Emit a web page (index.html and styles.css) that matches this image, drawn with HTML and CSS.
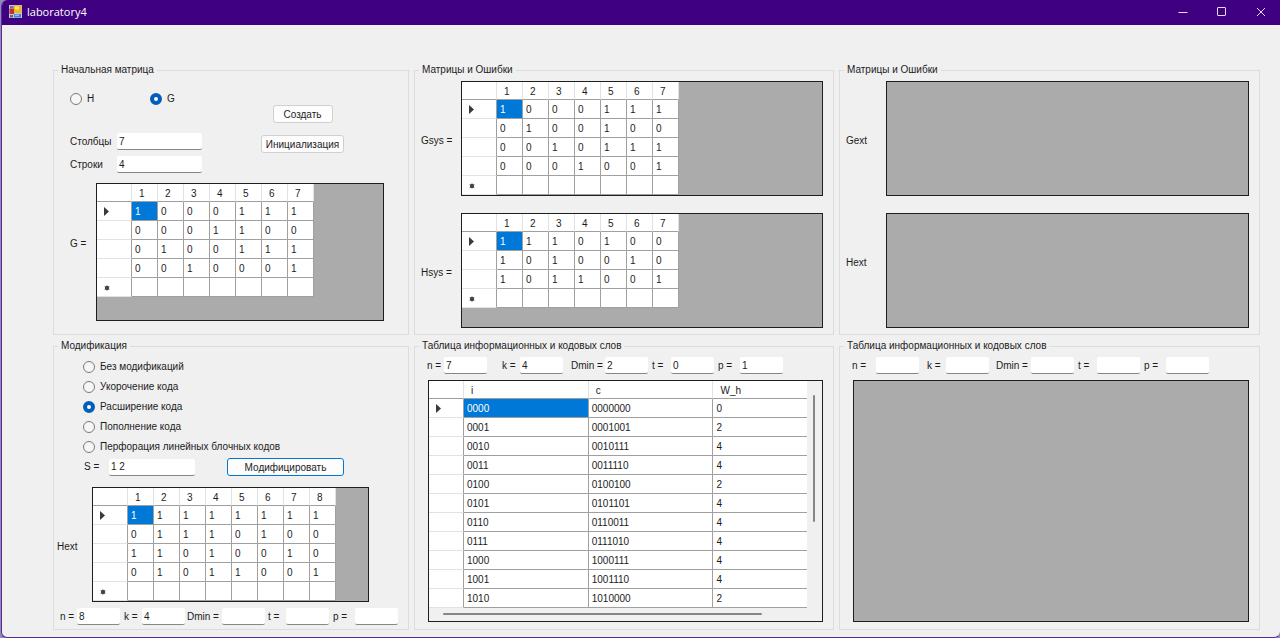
FILE: index.html
```html
<!DOCTYPE html>
<html lang="ru">
<head>
<meta charset="utf-8">
<title>laboratory4</title>
<link rel="stylesheet" href="styles.css">
</head>
<body>
<svg width="0" height="0" class="sprite" aria-hidden="true">
  <symbol id="arrow" viewBox="0 0 5 9"><path d="M0 0L5 4.500L0 9Z" fill="#3a3a3a"/></symbol>
  <symbol id="star" viewBox="0 0 6 6"><path d="M3 0.500V5.500M0.600 1.500L5.400 4.500M5.400 1.500L0.600 4.500" stroke="#777" stroke-width="1"/><circle cx="3" cy="3" r="2.200" fill="#444"/></symbol>
</svg>
<div class="window">
  <header class="titlebar">
    <svg class="app-icon" viewBox="0 0 13 13" aria-hidden="true">
      <rect width="13" height="13" fill="#c9c4d6"/>
      <rect x="0.500" y="3.500" width="4.500" height="5.500" fill="#b8342c"/>
      <rect x="1" y="1" width="3.500" height="2" fill="#77748c"/>
      <rect x="5" y="0.500" width="7.500" height="7.500" fill="#f0b41c"/>
      <rect x="6" y="1.500" width="4" height="3" fill="#ffe27a"/>
      <rect x="5" y="9" width="7" height="3.500" fill="#3f7fe0"/>
      <rect x="6" y="9.500" width="4" height="1.500" fill="#8fbcff"/>
      <rect x="1" y="10" width="3" height="2.500" fill="#66637c"/>
    </svg>
    <h1 class="title">laboratory4</h1>
    <button class="win-btn" aria-label="Свернуть"><svg viewBox="0 0 10 10"><path d="M0.500 5.500H9.500"/></svg></button>
    <button class="win-btn" aria-label="Развернуть"><svg viewBox="0 0 10 10"><rect x="0.500" y="0.500" width="8" height="8" rx="0.500"/></svg></button>
    <button class="win-btn" aria-label="Закрыть"><svg viewBox="0 0 10 10"><path d="M1 1L9 9M9 1L1 9"/></svg></button>
  </header>

  <main class="form">
    <fieldset class="group">
      <legend>Начальная матрица</legend>
      <div class="setup">
        <div class="setup-left">
          <div class="kind">
            <label class="radio"><input type="radio" name="kind">H</label>
            <label class="radio"><input type="radio" name="kind" checked>G</label>
          </div>
          <div class="sizes">
            <label for="cols">Столбцы</label><input class="text" id="cols" value="7">
            <label for="rows">Строки</label><input class="text" id="rows" value="4">
          </div>
        </div>
        <div class="setup-buttons">
          <button class="btn btn-small">Создать</button>
          <button class="btn btn-init">Инициализация</button>
        </div>
      </div>
      <div class="matrix matrix-g">
        <span class="matrix-label label-high">G =</span>
        <div class="grid">
          <table class="cells">
            <thead><tr><th></th><th>1</th><th>2</th><th>3</th><th>4</th><th>5</th><th>6</th><th>7</th></tr></thead>
            <tbody>
              <tr><th><svg class="arrow"><use href="#arrow"/></svg></th><td class="selected">1</td><td>0</td><td>0</td><td>0</td><td>1</td><td>1</td><td>1</td></tr>
              <tr><th></th><td>0</td><td>0</td><td>0</td><td>1</td><td>1</td><td>0</td><td>0</td></tr>
              <tr><th></th><td>0</td><td>1</td><td>0</td><td>0</td><td>1</td><td>1</td><td>1</td></tr>
              <tr><th></th><td>0</td><td>0</td><td>1</td><td>0</td><td>0</td><td>0</td><td>1</td></tr>
              <tr><th><svg class="star"><use href="#star"/></svg></th><td></td><td></td><td></td><td></td><td></td><td></td><td></td></tr>
            </tbody>
          </table>
        </div>
      </div>
    </fieldset>

    <fieldset class="group">
      <legend>Матрицы и Ошибки</legend>
      <div class="matrices">
        <span class="matrix-label label-low">Gsys =</span>
        <div class="grid">
          <table class="cells">
            <thead><tr><th></th><th>1</th><th>2</th><th>3</th><th>4</th><th>5</th><th>6</th><th>7</th></tr></thead>
            <tbody>
              <tr><th><svg class="arrow"><use href="#arrow"/></svg></th><td class="selected">1</td><td>0</td><td>0</td><td>0</td><td>1</td><td>1</td><td>1</td></tr>
              <tr><th></th><td>0</td><td>1</td><td>0</td><td>0</td><td>1</td><td>0</td><td>0</td></tr>
              <tr><th></th><td>0</td><td>0</td><td>1</td><td>0</td><td>1</td><td>1</td><td>1</td></tr>
              <tr><th></th><td>0</td><td>0</td><td>0</td><td>1</td><td>0</td><td>0</td><td>1</td></tr>
              <tr><th><svg class="star"><use href="#star"/></svg></th><td></td><td></td><td></td><td></td><td></td><td></td><td></td></tr>
            </tbody>
          </table>
        </div>
        <span class="matrix-label label-low">Hsys =</span>
        <div class="grid">
          <table class="cells">
            <thead><tr><th></th><th>1</th><th>2</th><th>3</th><th>4</th><th>5</th><th>6</th><th>7</th></tr></thead>
            <tbody>
              <tr><th><svg class="arrow"><use href="#arrow"/></svg></th><td class="selected">1</td><td>1</td><td>1</td><td>0</td><td>1</td><td>0</td><td>0</td></tr>
              <tr><th></th><td>1</td><td>0</td><td>1</td><td>0</td><td>0</td><td>1</td><td>0</td></tr>
              <tr><th></th><td>1</td><td>0</td><td>1</td><td>1</td><td>0</td><td>0</td><td>1</td></tr>
              <tr><th><svg class="star"><use href="#star"/></svg></th><td></td><td></td><td></td><td></td><td></td><td></td><td></td></tr>
            </tbody>
          </table>
        </div>
      </div>
    </fieldset>

    <fieldset class="group">
      <legend>Матрицы и Ошибки</legend>
      <div class="matrices">
        <span class="matrix-label label-low">Gext</span>
        <div class="grid"></div>
        <span class="matrix-label label-high">Hext</span>
        <div class="grid"></div>
      </div>
    </fieldset>

    <fieldset class="group">
      <legend>Модификация</legend>
      <div class="mods">
        <label class="radio"><input type="radio" name="mod">Без модификаций</label>
        <label class="radio"><input type="radio" name="mod">Укорочение кода</label>
        <label class="radio"><input type="radio" name="mod" checked>Расширение кода</label>
        <label class="radio"><input type="radio" name="mod">Пополнение кода</label>
        <label class="radio"><input type="radio" name="mod">Перфорация линейных блочных кодов</label>
      </div>
      <div class="apply">
        <label for="s">S =</label><input class="text" id="s" value="1 2">
        <button class="btn btn-default">Модифицировать</button>
      </div>
      <div class="matrix matrix-ext">
        <span class="matrix-label label-low">Hext</span>
        <div class="grid">
          <table class="cells cells-8">
            <thead><tr><th></th><th>1</th><th>2</th><th>3</th><th>4</th><th>5</th><th>6</th><th>7</th><th>8</th></tr></thead>
            <tbody>
              <tr><th><svg class="arrow"><use href="#arrow"/></svg></th><td class="selected">1</td><td>1</td><td>1</td><td>1</td><td>1</td><td>1</td><td>1</td><td>1</td></tr>
              <tr><th></th><td>0</td><td>1</td><td>1</td><td>1</td><td>0</td><td>1</td><td>0</td><td>0</td></tr>
              <tr><th></th><td>1</td><td>1</td><td>0</td><td>1</td><td>0</td><td>0</td><td>1</td><td>0</td></tr>
              <tr><th></th><td>0</td><td>1</td><td>0</td><td>1</td><td>1</td><td>0</td><td>0</td><td>1</td></tr>
              <tr><th><svg class="star"><use href="#star"/></svg></th><td></td><td></td><td></td><td></td><td></td><td></td><td></td><td></td></tr>
            </tbody>
          </table>
        </div>
      </div>
      <div class="params params-mod">
        <label for="n1">n =</label><input class="text" id="n1" value="8">
        <label for="k1">k =</label><input class="text" id="k1" value="4">
        <label for="d1">Dmin =</label><input class="text" id="d1">
        <label for="t1">t =</label><input class="text" id="t1">
        <label for="p1">p =</label><input class="text" id="p1">
      </div>
    </fieldset>

    <fieldset class="group">
      <legend>Таблица информационных и кодовых слов</legend>
      <div class="params params-words">
        <label for="n2">n =</label><input class="text" id="n2" value="7">
        <label for="k2">k =</label><input class="text" id="k2" value="4">
        <label for="d2">Dmin =</label><input class="text" id="d2" value="2">
        <label for="t2">t =</label><input class="text" id="t2" value="0">
        <label for="p2">p =</label><input class="text" id="p2" value="1">
      </div>
      <div class="grid words">
        <table class="cells cells-words">
          <colgroup><col class="col-head"><col class="col-word"><col class="col-word"><col></colgroup>
          <thead><tr><th></th><th>i</th><th>c</th><th>W_h</th></tr></thead>
          <tbody>
            <tr><th><svg class="arrow"><use href="#arrow"/></svg></th><td class="selected">0000</td><td>0000000</td><td>0</td></tr>
            <tr><th></th><td>0001</td><td>0001001</td><td>2</td></tr>
            <tr><th></th><td>0010</td><td>0010111</td><td>4</td></tr>
            <tr><th></th><td>0011</td><td>0011110</td><td>4</td></tr>
            <tr><th></th><td>0100</td><td>0100100</td><td>2</td></tr>
            <tr><th></th><td>0101</td><td>0101101</td><td>4</td></tr>
            <tr><th></th><td>0110</td><td>0110011</td><td>4</td></tr>
            <tr><th></th><td>0111</td><td>0111010</td><td>4</td></tr>
            <tr><th></th><td>1000</td><td>1000111</td><td>4</td></tr>
            <tr><th></th><td>1001</td><td>1001110</td><td>4</td></tr>
            <tr><th></th><td>1010</td><td>1010000</td><td>2</td></tr>
          </tbody>
        </table>
        <div class="track-v"><div class="thumb-v"></div></div>
        <div class="track-h"><div class="thumb-h"></div></div>
      </div>
    </fieldset>

    <fieldset class="group">
      <legend>Таблица информационных и кодовых слов</legend>
      <div class="params params-empty">
        <label for="n3">n =</label><input class="text" id="n3">
        <label for="k3">k =</label><input class="text" id="k3">
        <label for="d3">Dmin =</label><input class="text" id="d3">
        <label for="t3">t =</label><input class="text" id="t3">
        <label for="p3">p =</label><input class="text" id="p3">
      </div>
      <div class="grid words-empty"></div>
    </fieldset>
  </main>
</div>
</body>
</html>
```
FILE: styles.css
```css
* { box-sizing: border-box; }

body {
  margin: 0;
  padding-left: 1px;
  background: #8f8bb4;
  color: #1c1c1c;
  font: 10px/12px "Liberation Sans", Arial, sans-serif;
}

button, input { font: inherit; color: inherit; }

.sprite { position: absolute; }

.window {
  display: flex;
  flex-direction: column;
  min-height: 100vh;
  border: solid #5a2a9c;
  border-width: 0 0 1px 1px;
  border-radius: 6px 0 6px 6px;
  background: #f0f0f0;
  overflow: hidden;
}

/* Title bar */
.titlebar {
  display: flex;
  align-items: center;
  height: 25px;
  padding: 0 0 2px 7px;
  background: #3f0082;
  color: #fff;
}
.app-icon { width: 13px; height: 13px; }
.title {
  flex: 1;
  margin: 0 0 0 5px;
  font: 11px/16px "Open Sans", "Noto Sans", sans-serif;
}
.win-btn {
  display: grid;
  place-items: center;
  width: 39px;
  height: 23px;
  padding: 0;
  border: 0;
  background: none;
}
.win-btn svg {
  width: 10px;
  height: 10px;
  fill: none;
  stroke: #e6dcf2;
  stroke-width: 1;
}

/* Form */
.form {
  flex: 1;
  display: grid;
  grid-template-columns: 356fr 420fr 421fr;
  align-content: start;
  gap: 5px;
  padding: 39px 20px 7px 51px;
}
.group {
  min-width: 0;
  margin: 0;
  padding: 0;
  border: 1px solid #dcdcdc;
}
.group legend {
  margin-left: 4px;
  padding: 0 3px;
}

/* Controls */
.text {
  width: 43px;
  height: 17px;
  padding: 0 2px;
  border: 0;
  border-bottom: 1px solid #868686;
  border-radius: 2px;
  background: #fff;
}
.btn {
  height: 18px;
  padding: 1px 0 0;
  border: 1px solid #d0d0d0;
  border-radius: 3px;
  background: #fdfdfd;
  white-space: nowrap;
}
.btn-small { width: 60px; }
.btn-init { width: 83px; }
.btn-default {
  width: 117px;
  border-color: #0078d4;
}
.radio {
  display: flex;
  align-items: center;
  gap: 5px;
}
.radio input {
  appearance: none;
  width: 12px;
  height: 12px;
  margin: 0;
  border: 1px solid #7a7a7a;
  border-radius: 50%;
  background: #f6f6f6;
}
.radio input:checked {
  border: 4px solid #005fb8;
  background: #fff;
}

/* Source matrix */
.setup {
  display: flex;
  padding-left: 16px;
}
.setup-left { width: 191px; }
.kind {
  display: grid;
  grid-template-columns: 80px 80px;
  height: 14px;
  margin-top: 16px;
}
.sizes {
  display: grid;
  grid-template-columns: 47px 85px;
  align-items: center;
  row-gap: 6px;
  margin-top: 27px;
}
.sizes .text { width: 85px; }
.setup-buttons {
  display: flex;
  flex-direction: column;
  align-items: center;
  gap: 12px;
  padding-top: 29px;
}

.matrix {
  display: flex;
  align-items: center;
}
.matrix .grid { flex: 1; }
.matrix-g { padding: 10px 24px 13px 16px; }
.matrix-g .matrix-label { width: 26px; }
.matrix-g .grid { min-height: 138px; }
.matrix-ext { padding: 11px 39px 6px 3px; }
.matrix-ext .matrix-label { width: 35px; }
.label-high { padding-bottom: 16px; }
.label-low { padding-top: 5px; }

.matrices {
  display: grid;
  grid-template-columns: 40px 1fr;
  align-items: center;
  row-gap: 17px;
  padding: 5px 10px 6px 6px;
}

/* Data grid */
.grid {
  min-height: 115px;
  border: 1px solid #1e1e1e;
  background: #ababab;
}
.cells {
  width: 217px;
  table-layout: fixed;
  border-collapse: separate;
  border-spacing: 0;
  background: #fff;
}
.cells-8 { width: 243px; }
.cells th, .cells td {
  height: 19px;
  padding: 1px 0 0 3px;
  border: solid #a0a0a0;
  border-width: 0 1px 1px 0;
  text-align: left;
  font-weight: normal;
}
.cells thead th {
  height: 18px;
  padding: 2px 0 0 7px;
  border-right-color: #e2e2e2;
}
.cells tbody th {
  padding-left: 7px;
  border-bottom-color: #e2e2e2;
}
.cells th:first-child { width: 35px; }
.cells .selected { background: #0078d7; color: #fff; }
.arrow { display: block; width: 5px; height: 9px; }
.star { display: block; width: 6px; height: 6px; }

/* Modification */
.mods {
  display: grid;
  grid-auto-rows: 20px;
  padding: 5px 0 1px 29px;
}
.apply {
  display: grid;
  grid-template-columns: 25px 118px 117px;
  align-items: center;
  padding-left: 30px;
}
.apply .text { width: 86px; }

/* Code parameters */
.params {
  display: grid;
  align-items: center;
  white-space: nowrap;
}
.params-mod {
  grid-template-columns: 17px 47px 18px 45px 35px 46px 18px 47px 22px 43px;
  padding: 0 0 4px 6px;
}
.params-words {
  grid-template-columns: 17px 58px 18px 51px 34px 47px 19px 47px 22px 43px;
  padding: 5px 0 6px 12px;
}
.params-empty {
  grid-template-columns: 24px 51px 19px 50px 35px 47px 19px 47px 22px 43px;
  padding: 5px 0 6px 12px;
}

/* Code word tables */
.words {
  display: grid;
  grid-template-columns: 1fr 15px;
  grid-template-rows: auto 13px;
  margin: 0 10px 7px 13px;
  background: #f0f0f0;
}
.words-empty {
  min-height: 242px;
  margin: 0 10px 7px 13px;
}
.cells-words { width: 100%; }
.col-head { width: 35px; }
.col-word { width: 33%; }
.cells-words tr > :last-child { border-right: 0; }
.track-v { padding: 14px 7px 0 6px; }
.thumb-v { height: 127px; border-radius: 1px; background: #868686; }
.track-h {
  grid-column: 1 / -1;
  padding: 5px 60px 0 14px;
}
.thumb-h { height: 2px; border-radius: 1px; background: #868686; }
```
